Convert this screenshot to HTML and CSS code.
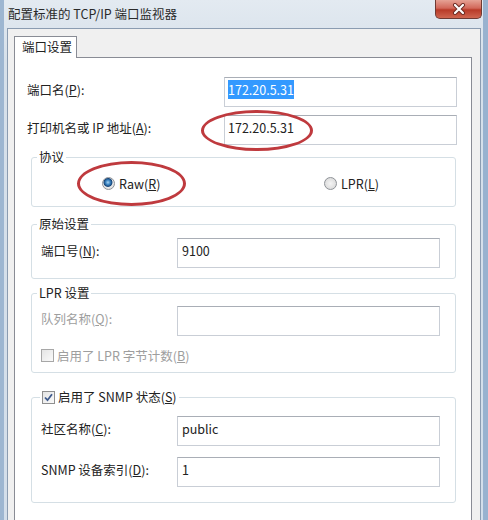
FILE: index.html
```html
<!DOCTYPE html>
<html lang="zh-CN">
<head>
<meta charset="utf-8">
<title>配置标准的 TCP/IP 端口监视器</title>
<link rel="stylesheet" href="styles.css">
</head>
<body>
<div class="window">
  <div class="titlebar">
    <span class="title">配置标准的 TCP/IP 端口监视器</span>
    <div class="close">
      <svg width="14" height="12" viewBox="0 0 14 12">
        <path d="M3 2 L11 10 M11 2 L3 10" stroke="#6b2a22" stroke-width="4" stroke-linecap="round"/>
        <path d="M3 2 L11 10 M11 2 L3 10" stroke="#ffffff" stroke-width="2.2" stroke-linecap="round"/>
      </svg>
    </div>
  </div>
  <div class="client">
    <div class="tabs"><div class="tab">端口设置</div></div>
    <div class="panel">
      <div class="row top-row">
        <label class="lbl lbl-top">端口名(<u>P</u>):</label>
        <div class="input input-top"><span class="sel">172.20.5.31</span></div>
      </div>
      <div class="row top-row">
        <label class="lbl lbl-top">打印机名或 IP 地址(<u>A</u>):</label>
        <div class="input input-top">172.20.5.31</div>
      </div>

      <fieldset class="group g-proto">
        <legend>协议</legend>
        <div class="radios">
          <label class="opt opt-raw"><span class="radio on"></span>Raw(<u>R</u>)</label>
          <label class="opt"><span class="radio"></span>LPR(<u>L</u>)</label>
        </div>
      </fieldset>

      <fieldset class="group g-raw">
        <legend>原始设置</legend>
        <div class="row">
          <label class="lbl lbl-grp">端口号(<u>N</u>):</label>
          <div class="input input-grp">9100</div>
        </div>
      </fieldset>

      <fieldset class="group g-lpr">
        <legend>LPR 设置</legend>
        <div class="row">
          <label class="lbl lbl-grp disabled">队列名称(<u>Q</u>):</label>
          <div class="input input-grp"></div>
        </div>
        <label class="check-row disabled"><span class="check"></span>启用了 LPR 字节计数(<u>B</u>)</label>
      </fieldset>

      <fieldset class="group g-snmp">
        <legend class="legend-check"><span class="check on">
          <svg width="9" height="9" viewBox="0 0 9 9"><path d="M1 4.5 L3.5 7.2 L8 1.2" fill="none" stroke="#3f5a8c" stroke-width="1.8"/></svg>
        </span>启用了 SNMP 状态(<u>S</u>)</legend>
        <div class="row snmp-row1">
          <label class="lbl lbl-grp">社区名称(<u>C</u>):</label>
          <div class="input input-grp">public</div>
        </div>
        <div class="row snmp-row2">
          <label class="lbl lbl-grp">SNMP 设备索引(<u>D</u>):</label>
          <div class="input input-grp">1</div>
        </div>
      </fieldset>
    </div>
  </div>
  <div class="mark mark-ip"></div>
  <div class="mark mark-raw"></div>
</div>
</body>
</html>
```

FILE: styles.css
```css
* { box-sizing: border-box; }

html, body {
  margin: 0;
  padding: 0;
  background: #dbe4ed;
}

body {
  font-family: "Noto Sans CJK SC", "Noto Sans", sans-serif;
  font-size: 12.5px;
  color: #222222;
}

.window {
  position: relative;
  width: 488px;
  height: 520px;
  overflow: hidden;
  background: linear-gradient(#e3eaf1, #d6e0ea 60px, #d3deea);
  box-shadow: inset 4px 0 0 #9db6d1, inset -5px 0 0 #98b2cf;
}

.titlebar {
  display: flex;
  align-items: flex-start;
  height: 28px;
}

.title {
  padding-left: 8px;
  line-height: 28px;
  font-size: 12.5px;
  color: #2a2a2a;
}

.close {
  margin-left: auto;
  margin-right: 6px;
  width: 47px;
  height: 19px;
  border: 1px solid #6f3a33;
  border-top: none;
  border-radius: 0 0 5px 5px;
  background: linear-gradient(#e6a295, #d2685a 45%, #b83a28 55%, #cf6650);
  display: flex;
  align-items: center;
  justify-content: center;
}

.client {
  margin: 0 7px;
  height: 492px;
  border: 1px solid #8b9cb1;
  border-bottom: none;
  background: #f0f0f0;
  padding: 7px 8px 0 6px;
  display: flex;
  flex-direction: column;
}

.tabs {
  display: flex;
}

.tab {
  position: relative;
  z-index: 1;
  width: 63px;
  height: 22px;
  margin-bottom: -1px;
  border: 1px solid #898c95;
  border-bottom: none;
  background: #ffffff;
  padding-left: 7px;
  line-height: 20px;
  font-size: 12.5px;
}

.panel {
  flex: 1;
  border: 1px solid #898c95;
  border-bottom: none;
  background: #ffffff;
  padding: 19px 14px 0 12px;
}

.row {
  display: flex;
  align-items: flex-start;
}

.top-row + .top-row {
  margin-top: 8px;
}

.lbl {
  padding-top: 4px;
  line-height: 17px;
  white-space: nowrap;
}

.lbl-top {
  width: 197px;
}

.lbl-grp {
  width: 136px;
  margin-left: 9px;
}

.input {
  height: 30px;
  border: 1px solid #c9ced6;
  border-top-color: #a9aeb6;
  background: #ffffff;
  line-height: 17px;
  padding: 3px 3px;
  white-space: nowrap;
}

.input-top {
  flex: 1;
}

.input-grp {
  flex: 1;
  margin-right: 15px;
  padding-left: 4px;
}

.sel {
  background: #3399ff;
  color: #ffffff;
}

.disabled {
  color: #9e9e9e;
}

.group {
  margin: 0 1px 0 4px;
  border: 1px solid #d5dfe5;
  border-radius: 3px;
  padding: 0;
  min-width: 0;
}

.group legend {
  margin-left: 5px;
  padding: 0 2px;
  line-height: 16px;
  height: 16px;
}

.g-proto {
  margin-top: 4px;
  padding: 10px 0 14px;
}

.radios {
  display: flex;
  align-items: center;
  padding-left: 70px;
  height: 17px;
}

.opt {
  display: flex;
  align-items: center;
  line-height: 17px;
}

.opt-raw {
  width: 222px;
}

.radio {
  width: 13px;
  height: 13px;
  border-radius: 50%;
  border: 1px solid #8e9297;
  background: radial-gradient(circle at 50% 50%, #f4f4f4 0, #dedede 70%, #cfcfcf 100%);
  margin-right: 4px;
  flex: none;
}

.radio.on {
  background: radial-gradient(circle at 45% 40%, #a9d3f2 0, #3d87c4 25%, #17467a 45%, #e8e8e8 55%, #d9d9d9 100%);
}

.g-raw {
  margin-top: 9px;
  padding: 6px 0 10px;
}

.g-lpr {
  margin-top: 6px;
  padding: 5px 0 8px;
}

.check-row {
  display: flex;
  align-items: center;
  margin: 11px 0 0 9px;
  height: 17px;
  line-height: 17px;
}

.check {
  width: 13px;
  height: 13px;
  border: 1px solid #a7a7a7;
  background: linear-gradient(135deg, #e4e4e4, #fafafa);
  margin-right: 3px;
  flex: none;
  display: flex;
  align-items: center;
  justify-content: center;
}

.check.on {
  border-color: #8f8f8f;
}

.g-snmp {
  margin-top: 16px;
  padding: 11px 0 15px;
}

.group .legend-check {
  display: flex;
  align-items: center;
  margin-left: 8px;
}

.snmp-row2 {
  margin-top: 11px;
}

.mark {
  position: absolute;
  border: 3px solid #bf3a3e;
  border-radius: 50%;
  pointer-events: none;
}

.mark-ip {
  left: 201px;
  top: 110px;
  width: 112px;
  height: 41px;
}

.mark-raw {
  left: 77px;
  top: 161px;
  width: 109px;
  height: 45px;
}
```
